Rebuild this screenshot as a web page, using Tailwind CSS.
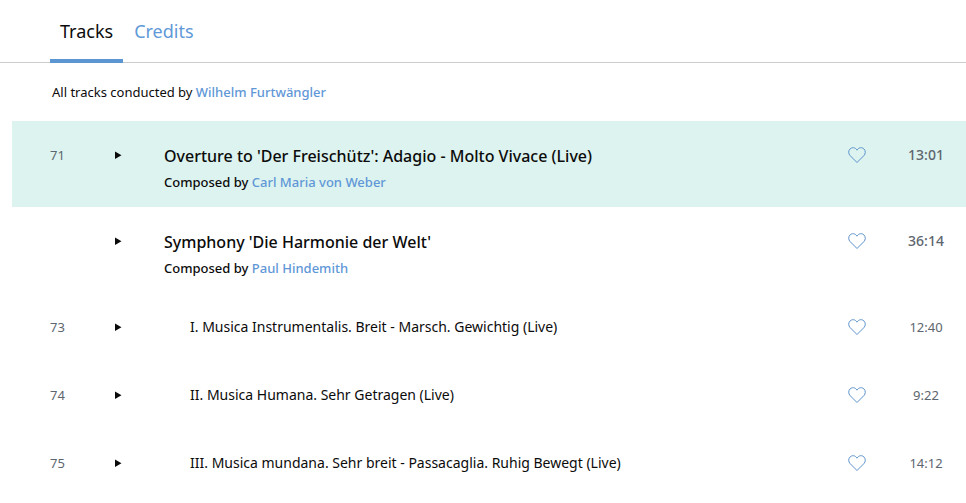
<!DOCTYPE html>
<html lang="en"><head><meta charset="utf-8"><title>Tracks</title>
<script src="https://cdn.jsdelivr.net/npm/@tailwindcss/browser@4"></script></head>
<body class="bg-white text-[#0b0b0b] font-['Noto_Sans',sans-serif]">
<svg class="hidden"><symbol id="heart" viewBox="0 0 18 18"><path d="M9 16.500 2.200 9.700C.3 7.800 .2 4.800 2 3C4 1 7.300 1.200 9 4.200C10.700 1.200 14 1 16 3C17.800 4.800 17.700 7.800 15.800 9.700Z" fill="none" stroke="currentColor" stroke-linejoin="round"/></symbol>
<symbol id="play" viewBox="0 0 8 8"><path d="M1 .5 7.500 4.250 1 8Z" fill="currentColor"/></symbol></svg>
<nav class="flex h-[63px] border-b border-[#ccc] pl-[50px] text-lg">
<a href="#tracks" class="-mb-px flex border-b-4 border-[#5b96d2] px-[10px] pt-[17px]">Tracks</a>
<a href="#credits" class="px-[11px] pt-[17px] text-[#5f99d8]">Credits</a>
</nav>
<main id="tracks" class="pl-3">
<p class="px-10 pt-[19px] pb-[19px] text-[13px] leading-5">All tracks conducted by <a href="#" class="font-medium text-[#5f97d7]">Wilhelm Furtwängler</a></p>
<table class="w-full table-fixed">
<colgroup><col class="w-[84px]"><col class="w-[68px]"><col><col class="w-[40px]"><col class="w-[78px]"></colgroup>
<tbody class="align-top">
<tr class="h-[86px] bg-[#ddf3ef]">
<td class="pt-6 pl-[38px] text-[13px] leading-5 text-[#5d666e]">71</td>
<td class="pt-[30px] pl-[18px]"><button aria-label="Play" class="block"><svg class="size-2"><use href="#play"/></svg></button></td>
<td class="pt-6"><div class="text-base leading-[22px] font-medium">Overture to 'Der Freischütz': Adagio - Molto Vivace (Live)</div><div class="mt-[5px] text-[13px] leading-5 font-medium">Composed by <a href="#" class="text-[#5f97d7]">Carl Maria von Weber</a></div></td>
<td class="pt-[25px]"><button aria-label="Favourite" class="block text-[#5b92cc]"><svg class="size-[18px]"><use href="#heart"/></svg></button></td>
<td class="pt-6 pr-0.5 text-center text-sm leading-5 font-medium text-[#5d666e]">13:01</td></tr>
<tr class="h-[86px]">
<td></td>
<td class="pt-[30px] pl-[18px]"><button aria-label="Play" class="block"><svg class="size-2"><use href="#play"/></svg></button></td>
<td class="pt-6"><div class="text-base leading-[22px] font-medium">Symphony 'Die Harmonie der Welt'</div><div class="mt-[5px] text-[13px] leading-5 font-medium">Composed by <a href="#" class="text-[#5f97d7]">Paul Hindemith</a></div></td>
<td class="pt-[25px]"><button aria-label="Favourite" class="block text-[#5b92cc]"><svg class="size-[18px]"><use href="#heart"/></svg></button></td>
<td class="pt-6 pr-0.5 text-center text-sm leading-5 font-medium text-[#5d666e]">36:14</td></tr>
<tr class="h-[68px]">
<td class="pt-6 pl-[38px] text-[13px] leading-5 text-[#5d666e]">73</td>
<td class="pt-[30px] pl-[18px]"><button aria-label="Play" class="block"><svg class="size-2"><use href="#play"/></svg></button></td>
<td class="pt-6 pl-[26px] text-sm leading-5">I. Musica Instrumentalis. Breit - Marsch. Gewichtig (Live)</td>
<td class="pt-[25px]"><button aria-label="Favourite" class="block text-[#5b92cc]"><svg class="size-[18px]"><use href="#heart"/></svg></button></td>
<td class="pt-6 pr-0.5 text-center text-[13px] leading-5 text-[#5d666e]">12:40</td></tr>
<tr class="h-[68px]">
<td class="pt-6 pl-[38px] text-[13px] leading-5 text-[#5d666e]">74</td>
<td class="pt-[30px] pl-[18px]"><button aria-label="Play" class="block"><svg class="size-2"><use href="#play"/></svg></button></td>
<td class="pt-6 pl-[26px] text-sm leading-5">II. Musica Humana. Sehr Getragen (Live)</td>
<td class="pt-[25px]"><button aria-label="Favourite" class="block text-[#5b92cc]"><svg class="size-[18px]"><use href="#heart"/></svg></button></td>
<td class="pt-6 pr-0.5 text-center text-[13px] leading-5 text-[#5d666e]">9:22</td></tr>
<tr>
<td class="pt-6 pl-[38px] text-[13px] leading-5 text-[#5d666e]">75</td>
<td class="pt-[30px] pl-[18px]"><button aria-label="Play" class="block"><svg class="size-2"><use href="#play"/></svg></button></td>
<td class="pt-6 pb-5 pl-[26px] text-sm leading-5">III. Musica mundana. Sehr breit - Passacaglia. Ruhig Bewegt (Live)</td>
<td class="pt-[25px]"><button aria-label="Favourite" class="block text-[#5b92cc]"><svg class="size-[18px]"><use href="#heart"/></svg></button></td>
<td class="pt-6 pr-0.5 text-center text-[13px] leading-5 text-[#5d666e]">14:12</td></tr>
</tbody></table></main></body></html>
